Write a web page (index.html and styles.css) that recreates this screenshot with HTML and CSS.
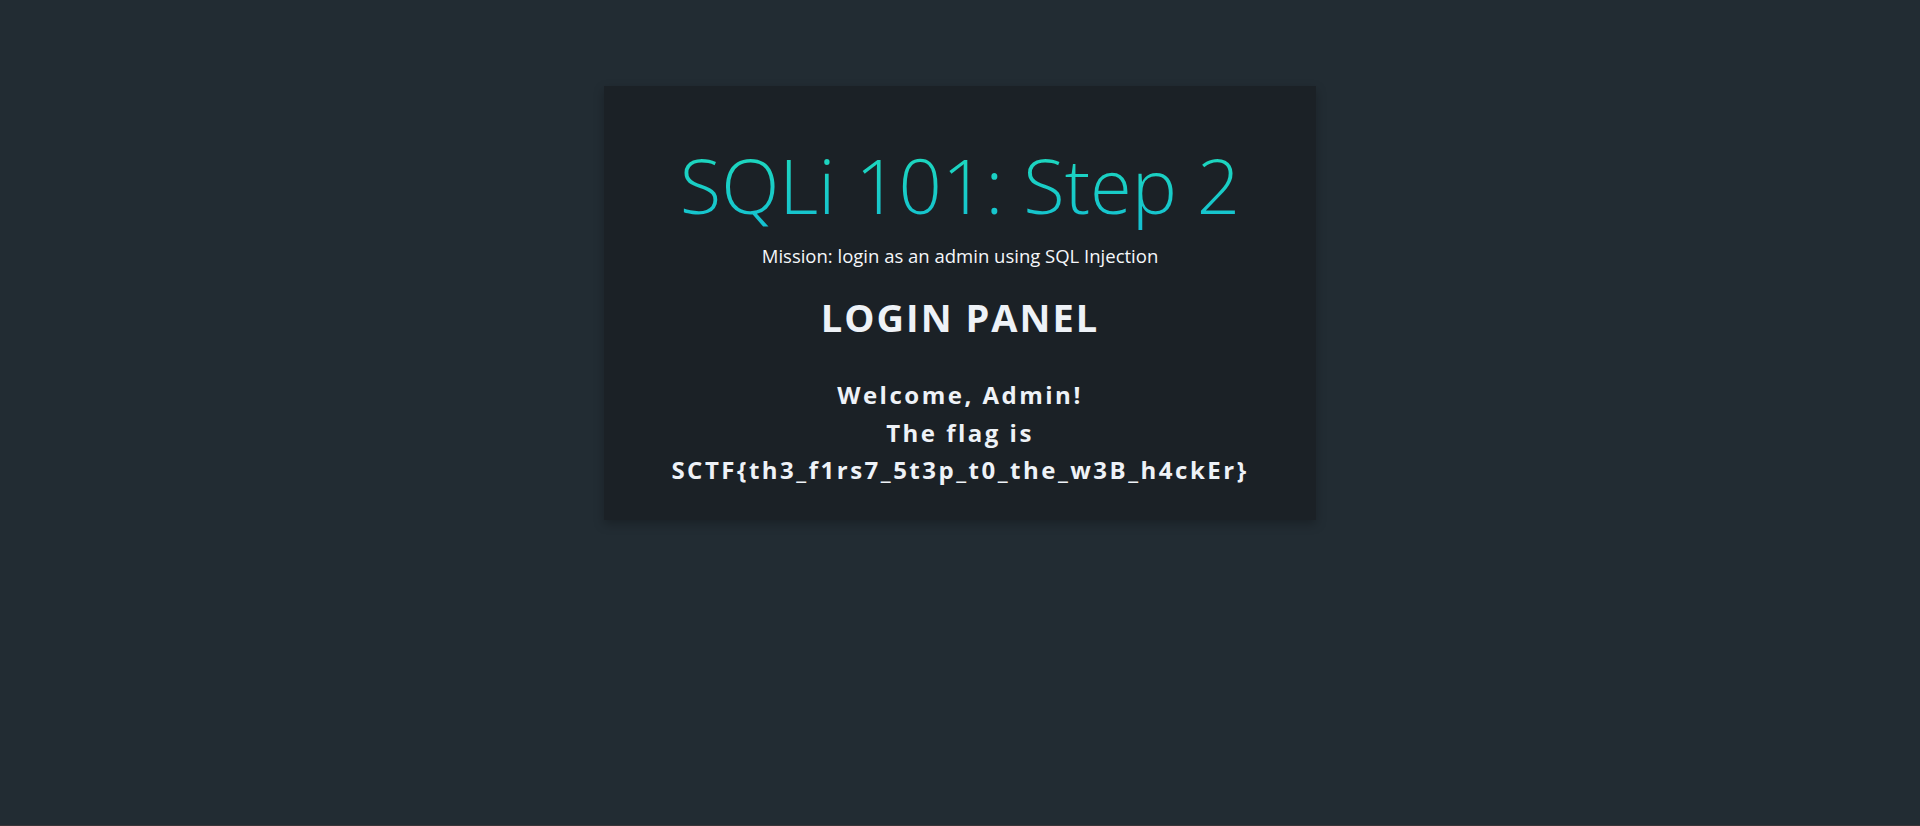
FILE: index.html
```html
<!DOCTYPE html>
<html lang="en">
<head>
    <meta charset="UTF-8">
    <meta name="viewport" content="width=device-width, initial-scale=1.0">
    <title>SQLi 101: Step 2</title>
    <link rel="stylesheet" href="styles.css">
</head>
<body>
    <div class="container">
        <h1 class="title">SQLi 101: Step 2</h1>
        <p class="mission">Mission: login as an admin using SQL Injection</p>
        <h2 class="panel-title">LOGIN PANEL</h2>
        <!-- Result -->
        <div class="result">
            <p>Welcome, Admin!</p>
            <p>The flag is</p>
            <p>SCTF{th3_f1rs7_5t3p_t0_the_w3B_h4ckEr}</p>
        </div>
    </div>
</body>
</html>
```

FILE: styles.css
```css
/* General Styling */
html, body {
    height: 100%;
}
body {
    font-family: 'Open Sans', 'Noto Sans', sans-serif;
    background: #222c33;
    margin: 0;
    padding: 0;
    color: #eef2f7;
    box-sizing: border-box;
    border-bottom: 1px solid #3a3538;
    overflow: hidden;
}
.container {
    width: 712px;
    box-sizing: border-box;
    margin: 86px auto 0;
    padding: 53px 20px 31px;
    background: #1b2126;
    box-shadow: 0 4px 10px rgba(0, 0, 0, 0.25);
    text-align: center;
}
.title {
    margin: 0;
    font-size: 76px;
    font-weight: 300;
    line-height: 1.2;
    background: linear-gradient(to bottom, #1fdcb9, #14c0d2);
    -webkit-background-clip: text;
    background-clip: text;
    color: transparent;
}
.mission {
    margin: 13px 0 0;
    font-size: 18.5px;
    color: #f5f7fa;
}
.panel-title {
    margin: 23px 0 0;
    font-size: 38px;
    font-weight: 700;
    letter-spacing: 2px;
}
.result {
    margin-top: 33px;
    font-size: 24px;
    font-weight: 700;
    letter-spacing: 2.5px;
    line-height: 37.5px;
}
.result p {
    margin: 0;
}
```
